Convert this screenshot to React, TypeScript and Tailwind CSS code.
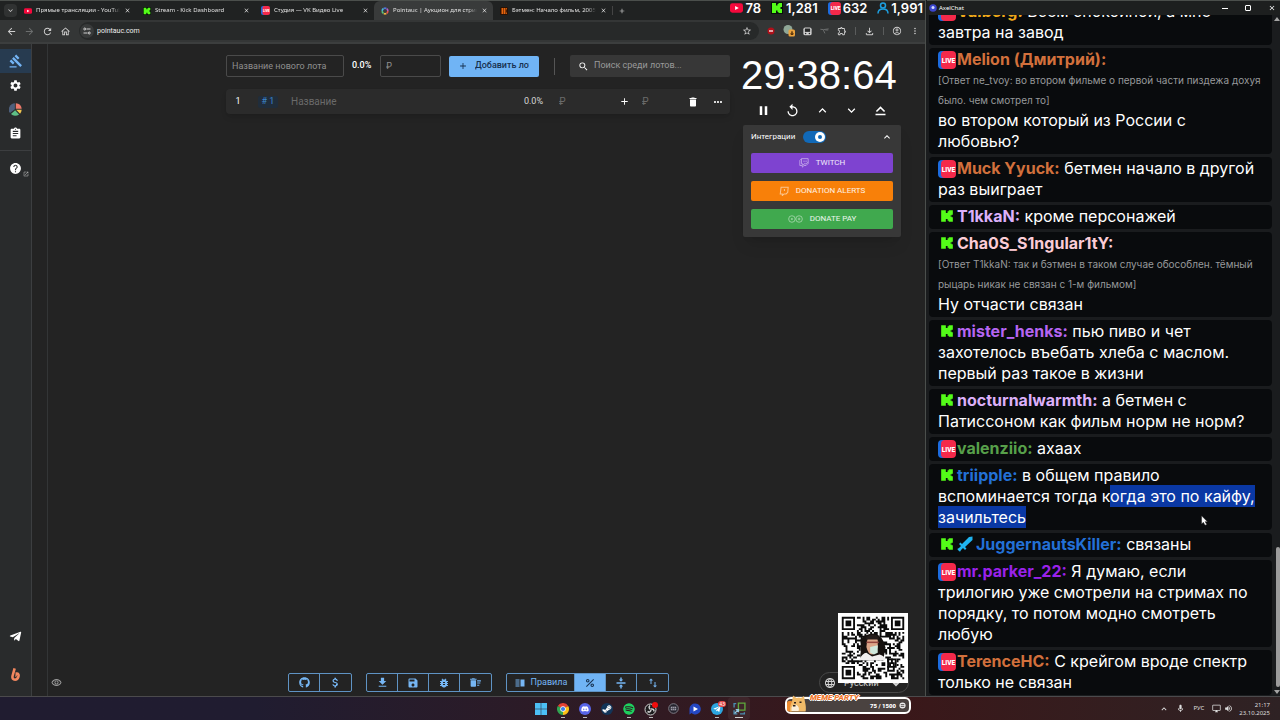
import React from "react";
import {
  MdAdd, MdArrowBack, MdArrowForward, MdAssignment, MdAttachMoney, MdBugReport, MdClose,
  MdDelete, MdDeleteSweep, MdExpandLess, MdExpandMore, MdFileDownload, MdGavel, MdHelp,
  MdLanguage, MdMoreHoriz, MdMoreVert, MdOutlineHome, MdOutlineRemoveRedEye, MdPause,
  MdPercent, MdRefresh, MdReplay, MdSave, MdSearch, MdSettings, MdStarBorder,
  MdVerticalSplit, MdOutlineFileDownload, MdOutlineExtension, MdOutlineAccountCircle,
  MdOpenInNew, MdOutlineMic, MdVolumeUp, MdOutlineDesktopWindows,
} from "react-icons/md";
import { FaDiscord, FaGithub, FaSpotify, FaSteamSymbol, FaTelegramPlane } from "react-icons/fa";

/* ---------- logos ---------- */

function YouTubeLogo({ className }: { className: string }) {
  return (
    <svg viewBox="0 0 28 20" className={className} aria-hidden="true">
      <rect width="28" height="20" rx="5" fill="#f5093c" />
      <path d="M11 5.5v9l8-4.5z" fill="#fff" />
    </svg>
  );
}

function KickLogo({ className, dark = false }: { className: string; dark?: boolean }) {
  return (
    <svg viewBox="0 0 24 24" className={className} aria-hidden="true">
      {dark && <rect width="24" height="24" fill="#07110a" />}
      <path
        d="M2 2h8v5h3V4h2V2h7v8h-2v1h-2v2h2v1h2v8h-7v-2h-2v-3h-3v5H2z"
        fill="#53fc18"
      />
    </svg>
  );
}

function LiveLogo({ className }: { className: string }) {
  return (
    <svg viewBox="0 0 36 36" className={className} role="img" aria-label="LIVE">
      <rect width="30" height="36" rx="8" fill="#1c6ce0" />
      <rect x="6" width="30" height="36" rx="8" fill="#f5294a" />
      <text x="21" y="23" textAnchor="middle" fontFamily="Liberation Sans Narrow, Roboto, sans-serif" fontWeight="900" fontSize="13" fill="#fff">
        LIVE
      </text>
    </svg>
  );
}

function PointaucLogo({ className }: { className: string }) {
  const arcs = ["#e8554e", "#f0b541", "#58c27d", "#4bb8d8", "#4f74d9", "#b45cc9"];
  return (
    <svg viewBox="0 0 24 24" className={className} aria-hidden="true">
      {arcs.map((c, i) => (
        <circle key={c} cx="12" cy="12" r="8.5" fill="none" stroke={c} strokeWidth="5" pathLength={60}
          strokeDasharray="9 51" strokeDashoffset={-i * 10} />
      ))}
    </svg>
  );
}

function WheelIcon({ className }: { className: string }) {
  return (
    <svg viewBox="0 0 40 40" className={className} aria-hidden="true">
      <path d="M18 19V1A19 19 0 0 0 3 31z" fill="#4d5f7c" />
      <path d="M21 18V1A19 19 0 0 1 39 18z" fill="#ee7a6b" />
      <path d="M22 21h17a19 19 0 0 1-5 12z" fill="#f1c54f" />
      <path d="M19 22 31 35A19 19 0 0 1 6 34z" fill="#5fbf86" />
    </svg>
  );
}

function TwitchGlyph({ className }: { className: string }) {
  return (
    <svg viewBox="0 0 24 24" className={className} fill="none" stroke="currentColor" strokeWidth="2" aria-hidden="true">
      <path d="M6 1.500h16V13l-5 5h-5l-4 4v-4H2V6z" />
      <path d="M6 2v12h3v3l3-3h5l5-4M12 6v4M17 6v4" />
    </svg>
  );
}

function AlertsGlyph({ className }: { className: string }) {
  return (
    <svg viewBox="0 0 24 24" className={className} fill="none" stroke="currentColor" strokeWidth="2.500" aria-hidden="true">
      <path d="M5 3h17l-1 12-4 4h-5l-4 4v-4H3z" />
      <path d="M13 7v5" />
    </svg>
  );
}

function DonatePayGlyph({ className }: { className: string }) {
  return (
    <svg viewBox="0 0 46 24" className={className} fill="none" stroke="currentColor" strokeWidth="2.500" aria-hidden="true">
      <circle cx="12" cy="12" r="10" />
      <circle cx="34" cy="12" r="10" />
      <path d="M9 12h6M12 9v6M30 12h8M34 8v8" />
    </svg>
  );
}

function BoostyLogo({ className }: { className: string }) {
  return (
    <svg viewBox="0 0 24 30" className={className} fill="none" stroke="#f2875f" strokeWidth="6" strokeLinejoin="round" aria-hidden="true">
      <path d="M10 1 5 19q-1 8 6 8c8 0 11-14 5-14h-4" />
      <path d="M16 13 12 20" strokeWidth="3" />
    </svg>
  );
}

function SwordIcon({ className }: { className: string }) {
  return (
    <svg viewBox="0 0 32 32" className={className} aria-hidden="true">
      <path d="M31 1v7L16 22l3 3-3 3-4-4-5 5 1 1-3 1-4-4 1-3 1 1 5-5-4-4 3-3 3 3L24 2z" fill="#1fb4f0" />
    </svg>
  );
}

/* ---------- browser chrome ---------- */

type Tab = { title: string; icon: React.ReactNode; active?: boolean };

const tabs: Tab[] = [
  { title: "Прямые трансляции - YouTube", icon: <YouTubeLogo className="h-[6px] w-[8px]" /> },
  { title: "Stream - Kick Dashboard", icon: <KickLogo dark className="size-[8px]" /> },
  { title: "Студия — VK Видео Live", icon: <LiveLogo className="size-[9px]" /> },
  { title: "Pointauc | Аукцион для стримеров", icon: <PointaucLogo className="size-[8px]" />, active: true },
  {
    title: "Бэтмен: Начало фильм, 2005,",
    icon: (
      <svg viewBox="0 0 16 16" className="size-[8px]" aria-hidden="true">
        <rect width="16" height="16" rx="3" fill="#2a1204" />
        <path d="M3 2h4v12H3zM8 2h2v12H8zM11 2h3l-2 6 2 6h-3z" fill="#e8640c" />
      </svg>
    ),
  },
];

function TabStrip() {
  return (
    <div className="flex h-[20px] shrink-0 items-center border-t border-[#4b4f4c] bg-[#202222] pl-[4px]">
      <button aria-label="Поиск вкладок" className="grid size-[13px] place-items-center rounded bg-[#303232] text-[#d0d0d0]">
        <MdExpandMore className="size-[9px]" />
      </button>
      {tabs.map((t) => (
        <div
          key={t.title}
          className={
            t.active
              ? "flex h-full w-[119px] items-center gap-[4px] rounded-t-md bg-[#393b3b] pr-[5px] pl-[6px]"
              : "flex h-full w-[119px] items-center gap-[4px] pr-[5px] pl-[6px]"
          }
        >
          <span className="flex w-[9px] shrink-0 justify-center">{t.icon}</span>
          <a href="#tab" className="min-w-0 flex-1 overflow-hidden mask-r-from-90% text-[6px] whitespace-nowrap text-[#e0e0e0]">
            {t.title}
          </a>
          <button aria-label="Закрыть вкладку" className="text-[#dedede]">
            <MdClose className="size-[7px]" />
          </button>
        </div>
      ))}
      <span className="h-[9px] w-px bg-[#444]" />
      <button aria-label="Новая вкладка" className="ml-[5px] text-[#d8d8d8]">
        <MdAdd className="size-[8px]" />
      </button>
      <div className="ml-auto flex items-center gap-[10px] self-start pr-[2px] font-[Inter,sans-serif] text-[13px] leading-[14px] font-semibold text-white">
        <span className="flex items-center gap-[2px]">
          <YouTubeLogo className="h-[10px] w-[13px]" />78
        </span>
        <span className="flex items-center gap-[3px]">
          <KickLogo dark className="size-[12px]" />1,281
        </span>
        <span className="flex items-center gap-[2px]">
          <LiveLogo className="size-[13px]" />632
        </span>
        <span className="flex items-center gap-[2px]">
          <svg viewBox="0 0 24 24" className="size-[12px]" fill="none" stroke="#1d9fe0" strokeWidth="3" aria-hidden="true">
            <circle cx="12" cy="7" r="5" />
            <path d="M2 23c0-7 5-9 10-9s10 2 10 9" />
          </svg>
          1,991
        </span>
      </div>
    </div>
  );
}

function AddressRow() {
  return (
    <div className="flex h-[24px] shrink-0 items-center border-b-2 border-[#3c3e3e] bg-[#343636] pr-[5px] pl-[6px] text-[#d0d0d0]">
      <div className="flex items-center gap-[7px]">
        <button aria-label="Назад"><MdArrowBack className="size-[11px]" /></button>
        <button aria-label="Вперёд" className="text-[#6c6e6e]"><MdArrowForward className="size-[11px]" /></button>
        <button aria-label="Обновить"><MdRefresh className="size-[11px]" /></button>
        <button aria-label="Домой"><MdOutlineHome className="size-[11px]" /></button>
      </div>
      <div className="ml-[8px] flex h-[18px] flex-1 items-center gap-[3px] rounded-full bg-[#272929] pr-[7px] pl-px">
        <span className="grid size-[14px] place-items-center rounded-full bg-[#383a3a]">
          <svg viewBox="0 0 16 16" className="size-[8px]" fill="none" stroke="currentColor" strokeWidth="2" aria-hidden="true">
            <path d="M7 4h8M1 12h8" />
            <circle cx="3.500" cy="4" r="2" />
            <circle cx="12.500" cy="12" r="2" />
          </svg>
        </span>
        <input aria-label="Адрес" defaultValue="pointauc.com" className="min-w-0 flex-1 bg-transparent font-[Roboto,sans-serif] text-[7px] text-[#eeeeee] outline-none" />
        <MdStarBorder className="size-[10px]" />
      </div>
      <div className="ml-[8px] flex items-center gap-[8px]">
        <svg viewBox="0 0 16 16" className="size-[8px]" aria-hidden="true">
          <circle cx="8" cy="8" r="7" fill="#b0101a" />
          <path d="M4 8h8" stroke="#fff" strokeWidth="2.500" />
        </svg>
        <svg viewBox="0 0 24 24" className="size-[12px]" aria-hidden="true">
          <circle cx="10" cy="9" r="9" fill="#8fa797" />
          <rect x="11" y="9" width="13" height="14" rx="3" fill="#eba23c" />
          <path d="M18 12v8M16 16h4v3h-4z" stroke="#59330b" strokeWidth="2" fill="none" />
        </svg>
        <svg viewBox="0 0 24 24" className="size-[9px]" aria-hidden="true">
          <rect x="1" y="1" width="22" height="21" rx="5" fill="#cfcfcf" />
          <path d="M5 4h14v9H5z" fill="#272929" />
          <circle cx="7" cy="17" r="2" fill="#272929" />
          <circle cx="17" cy="17" r="2" fill="#272929" />
        </svg>
        <svg viewBox="0 0 24 24" className="size-[9px]" fill="none" stroke="#6e7070" strokeWidth="2.500" aria-hidden="true">
          <path d="M1 6l8 1 14-2M9 8l4 9M14 8h8" />
        </svg>
        <MdOutlineExtension className="size-[10px]" />
        <span className="h-[8px] w-px bg-[#5a5c5c]" />
        <MdOutlineFileDownload className="size-[11px]" />
        <span className="h-[8px] w-px bg-[#5a5c5c]" />
        <MdOutlineAccountCircle className="size-[10px]" />
        <MdMoreVert className="size-[10px]" />
      </div>
    </div>
  );
}

function BrowserHeader() {
  return (
    <header className="font-[Noto_Sans,sans-serif]">
      <TabStrip />
      <AddressRow />
    </header>
  );
}

/* ---------- auction page ---------- */

function Sidebar() {
  const item = "grid h-[24px] w-full place-items-center";
  return (
    <nav className="flex w-[32px] shrink-0 flex-col items-center border-r border-[#3c3e40] bg-[#292b2c] pt-[5px] text-white">
      <a href="#auction" aria-label="Аукцион" className={`${item} bg-[#273b50] text-[#74b4f4]`}><MdGavel className="size-[14px]" /></a>
      <a href="#settings" aria-label="Настройки" className={item}><MdSettings className="size-[13px]" /></a>
      <a href="#wheel" aria-label="Колесо" className={item}><WheelIcon className="size-[13px]" /></a>
      <a href="#history" aria-label="История" className={item}><MdAssignment className="size-[13px]" /></a>
      <hr className="mt-[5px] w-full border-[#3c3e40]" />
      <a href="#help" aria-label="Помощь" className="mt-[5px] flex h-[24px] w-full items-center pl-[9px]">
        <MdHelp className="size-[13px] shrink-0" />
        <MdOpenInNew className="mt-[12px] ml-px size-[6px] shrink-0 text-[#c0c0c0]" />
      </a>
      <div className="mt-auto flex flex-col items-center gap-[25px] pb-[15px]">
        <a href="#telegram" aria-label="Telegram"><FaTelegramPlane className="size-[13px]" /></a>
        <a href="#boosty" aria-label="Boosty"><BoostyLogo className="h-[13px] w-[11px]" /></a>
      </div>
    </nav>
  );
}

function LotForm() {
  const box = "h-[22px] rounded-xs border border-[#4a4a4a] bg-transparent px-[5px] text-[9px] text-white placeholder:text-[#8f8f8f] outline-none";
  return (
    <form className="flex items-center gap-[8px]" onSubmit={(e) => e.preventDefault()}>
      <input aria-label="Название нового лота" placeholder="Название нового лота" className={`${box} w-[118px]`} />
      <span className="w-[20px] text-[9px] font-medium text-white">0.0%</span>
      <input aria-label="Сумма" placeholder="₽" className={`${box} w-[61px]`} />
      <button className="flex h-[21px] w-[90px] items-center gap-[7px] rounded-xs bg-[#70b4f5] pl-[9px] text-[9px] font-medium text-[#17314f]">
        <MdAdd className="size-[10px] shrink-0" />
        <span className="w-[54px] overflow-hidden text-left whitespace-nowrap">Добавить лот</span>
      </button>
      <span className="mx-[7px] h-[17px] w-px bg-[#555]" />
      <label className="flex h-[22px] min-w-0 flex-1 items-center gap-[5px] rounded-xs bg-[#373737] px-[8px] text-white">
        <MdSearch className="size-[11px] shrink-0" />
        <input aria-label="Поиск среди лотов" placeholder="Поиск среди лотов..." className="min-w-0 flex-1 bg-transparent text-[9px] placeholder:text-[#9a9a9a] outline-none" />
      </label>
    </form>
  );
}

function LotRow() {
  return (
    <div className="flex h-[25px] items-center rounded bg-[#2b2b2b] pr-[6px] text-[10px] text-[#d6d6d6] shadow-md">
      <span className="w-[24px] text-center text-[9px] text-white">1</span>
      <span className="ml-[8px] flex h-[12px] w-[20px] items-center justify-center rounded-xs bg-[#202d3b] text-[9px] text-[#3d86cc]"># 1</span>
      <input aria-label="Название" placeholder="Название" className="ml-[13px] min-w-0 flex-1 bg-transparent placeholder:text-[#6a6a6a] outline-none" />
      <span className="text-[9px]">0.0%</span>
      <input aria-label="Сумма лота" placeholder="₽" className="ml-[16px] w-[60px] bg-transparent placeholder:text-[#6a6a6a] outline-none" />
      <button aria-label="Прибавить" className="text-white"><MdAdd className="size-[11px]" /></button>
      <input aria-label="Добавка" placeholder="₽" className="ml-[12px] w-[45px] bg-transparent placeholder:text-[#6a6a6a] outline-none" />
      <button aria-label="Удалить" className="text-white"><MdDelete className="size-[12px]" /></button>
      <button aria-label="Ещё" className="ml-[13px] text-white"><MdMoreHoriz className="size-[12px]" /></button>
    </div>
  );
}

function TimerPanel() {
  const service = "flex h-[20px] items-center justify-center gap-[7px] rounded-xs text-[8px] text-white/90";
  return (
    <aside className="w-[158px] shrink-0">
      <div className="-ml-[2px] pt-[5px] font-[Liberation_Sans,sans-serif] text-[40px] leading-[40px] whitespace-nowrap text-white">29:38:64</div>
      <div className="mt-[8px] flex items-center justify-between px-[13px] text-white">
        <button aria-label="Пауза"><MdPause className="size-[15px]" /></button>
        <button aria-label="Сбросить"><MdReplay className="size-[15px]" /></button>
        <button aria-label="Больше"><MdExpandLess className="size-[15px]" /></button>
        <button aria-label="Меньше"><MdExpandMore className="size-[15px]" /></button>
        <button aria-label="Максимум">
          <svg viewBox="0 0 24 24" className="size-[15px]" fill="none" stroke="currentColor" strokeWidth="2.500" aria-hidden="true">
            <path d="m5.500 13.500 6.500-6.500 6.500 6.500M4 18.500h16" />
          </svg>
        </button>
      </div>
      <section className="mt-[7px] rounded-xs bg-[#383838] px-[8px] pb-[8px] text-white shadow-lg">
        <div className="flex h-[28px] items-center pb-[4px]">
          <label htmlFor="integrations" className="text-[8px]">Интеграции</label>
          <span className="ml-[8px] grid h-[12px] w-[23px]">
            <input id="integrations" type="checkbox" role="switch" defaultChecked
              className="peer col-start-1 row-start-1 h-[12px] w-[23px] appearance-none rounded-full bg-[#1169b8]" />
            <span className="pointer-events-none col-start-1 row-start-1 mr-px grid size-[10px] place-items-center self-center justify-self-end rounded-full bg-white">
              <span className="size-[4px] rounded-full bg-[#1169b8]" />
            </span>
          </span>
          <button aria-label="Свернуть" className="ml-auto"><MdExpandLess className="size-[12px]" /></button>
        </div>
        <div className="flex flex-col gap-[8px]">
          <button className={`${service} bg-[#7e43d0]`}><TwitchGlyph className="size-[10px] opacity-60" />TWITCH</button>
          <button className={`${service} bg-[#f88009]`}><AlertsGlyph className="size-[10px] opacity-60" />DONATION ALERTS</button>
          <button className={`${service} bg-[#40a94e]`}><DonatePayGlyph className="h-[8px] w-[15px] opacity-60" />DONATE PAY</button>
        </div>
      </section>
    </aside>
  );
}

const group = "flex h-[19px] divide-x divide-[#5f93c4] overflow-hidden rounded-xs border border-[#5f93c4]";
const cell = "grid w-[31px] place-items-center";

function BottomBar() {
  return (
    <div className="flex items-center pb-[3px] text-[#76b6f3]">
      <button aria-label="Скрыть" className="ml-[3px] text-[#9a9a9a]"><MdOutlineRemoveRedEye className="size-[11px]" /></button>
      <div className="ml-[226px] flex gap-[14px]">
        <div className={group}>
          <button aria-label="GitHub" className={cell}><FaGithub className="size-[11px]" /></button>
          <button aria-label="Поддержать" className={cell}><MdAttachMoney className="size-[13px]" /></button>
        </div>
        <div className={group}>
          <button aria-label="Загрузить" className={cell}><MdFileDownload className="size-[13px]" /></button>
          <button aria-label="Сохранить" className={cell}><MdSave className="size-[12px]" /></button>
          <button aria-label="Сообщить об ошибке" className={cell}><MdBugReport className="size-[12px]" /></button>
          <button aria-label="Очистить" className={cell}><MdDeleteSweep className="size-[13px]" /></button>
        </div>
        <div className={group}>
          <button className="flex w-[68px] items-center justify-center gap-[5px] text-[9px]">
            <MdVerticalSplit className="size-[12px]" />Правила
          </button>
          <button aria-label="Проценты" className={`${cell} bg-[#70b4f5] text-[#17314f]`}><MdPercent className="size-[12px]" /></button>
          <button aria-label="Разделить" className={cell}>
            <svg viewBox="0 0 24 24" className="size-[12px]" fill="currentColor" aria-hidden="true">
              <path d="M3 10.500h18v3H3zM10.500 1h3v4h3L12 9.500 7.500 5h3zM10.500 23h3v-4h3L12 14.500 7.500 19h3z" />
            </svg>
          </button>
          <button aria-label="Сортировать" className={cell}>
            <svg viewBox="0 0 24 24" className="size-[12px]" fill="currentColor" aria-hidden="true">
              <path d="M8 3 4 7h3v7h2V7h3zM17 17v-7h-2v7h-3l4 4 4-4z" />
            </svg>
          </button>
        </div>
      </div>
      <label className="mr-[16px] ml-auto flex h-[21px] w-[90px] items-center gap-[4px] rounded-full border border-[#484848] px-[4px] text-[#d2d2d2]">
        <MdLanguage className="size-[12px] shrink-0" />
        <select aria-label="Язык" className="min-w-0 flex-1 bg-transparent text-[9px] outline-none">
          <option>Русский</option>
        </select>
      </label>
    </div>
  );
}

/* ---------- stream overlays ---------- */

const SIZE = 33;

function buildModules(): string {
  let seed = 20251;
  let d = "";
  const inCorner = (x: number, y: number) =>
    (x < 8 && y < 8) || (x > SIZE - 9 && y < 8) || (x < 8 && y > SIZE - 9);
  for (let y = 0; y < SIZE; y++) {
    for (let x = 0; x < SIZE; x++) {
      seed = (seed * 1103515245 + 12345) % 2147483648;
      const middle = Math.abs(x - 16) < 6 && Math.abs(y - 16) < 6;
      if (!inCorner(x, y) && !middle && (seed >> 12) % 100 < 52) d += `M${x} ${y}h1v1h-1z`;
    }
  }
  const finder = (x: number, y: number) =>
    `M${x} ${y}h7v7h-7zM${x + 1} ${y + 1}v5h5v-5zM${x + 2} ${y + 2}h3v3h-3z`;
  return d + finder(0, 0) + finder(SIZE - 7, 0) + finder(0, SIZE - 7);
}

const modules = buildModules();

function QrCode() {
  return (
    <svg viewBox="-2 -2 37 37" className="absolute right-[17px] bottom-[13px] size-[70px]" role="img" aria-label="QR-код">
      <rect x="-2" y="-2" width="37" height="37" fill="#fff" />
      <path d={modules} fill="#0b0b0b" />
      <path d="M24 22h5v5h-5zM25 23v3h3v-3zM26 24h1v1h-1z" fill="#0b0b0b" />
      <path d="M10 12q2-3 7-3 5 1 6 7l-1 7H10V15z" fill="#16110f" />
      <path d="M13.500 12q3-2 5.500 0v4q-1 4-3 4t-3-4z" fill="#dba588" />
      <path d="M13 10.500q4-2 6.500 0v1.500H13z" fill="#241c1a" />
      <path d="M13 13.500h6.500" stroke="#94463f" strokeWidth=".8" />
      <path d="m15 16 4-1v4l-2 1-2-1z" fill="#cfe8dc" />
      <path d="M9 23q2-4 4-4l3 2 4-1q3 1 3 3z" fill="#f0eeee" />
    </svg>
  );
}

function MemeParty() {
  return (
    <div className="absolute right-[14px] -bottom-[18px] z-10 flex h-[17px] w-[126px] items-center justify-end rounded-md border-2 border-white bg-[#4a4240] pr-[3px]">
      <svg viewBox="0 0 40 36" className="absolute bottom-0 left-0 h-[18px] w-[20px]" aria-hidden="true">
        <rect x="0" y="14" width="12" height="21" rx="4" fill="#ec8b30" />
        <path d="M6 35C5 26 8 20 10 15l2-12 7 5q5-2 9 0l6-4 2 12q3 12 1 19z" fill="#f1ba68" />
        <path d="M9 27q4-8 10-5 7 5 4 12H9z" fill="#fbeed8" />
        <path d="M14 16h4v3h-4zM25 15h4v3h-4zM12 22h5v3h-5z" fill="#2d211b" />
      </svg>
      <span className="absolute -top-[6px] left-[23px] text-[8px] leading-[10px] font-black text-[#f0762a] italic [text-shadow:0_1px_0_#fff,0_-1px_0_#fff,1px_0_0_#fff,-1px_0_0_#fff]">MEME PARTY</span>
      <span className="flex items-center gap-[3px] text-[6px] font-black text-white">
        75 / 1500
        <svg viewBox="0 0 16 16" className="size-[7px]" aria-hidden="true">
          <circle cx="8" cy="8" r="7" fill="#eee" />
          <path d="M4 6h8M4 10h8" stroke="#4a4240" strokeWidth="2" />
        </svg>
      </span>
    </div>
  );
}

function Browser() {
  return (
    <main className="relative flex min-w-0 flex-1 flex-col border-r border-[#4b4f4c] bg-[#232323] font-[Roboto,sans-serif]">
      <BrowserHeader />
      <div className="flex min-h-0 flex-1">
        <Sidebar />
        <div className="ml-[15px] flex min-w-0 flex-1 flex-col border-l border-[#333536]">
          <div className="flex flex-1 justify-end gap-[13px] pt-[6px] pr-[24px]">
            <div className="flex w-[504px] flex-col gap-[12px] pt-[5px]">
              <LotForm />
              <LotRow />
            </div>
            <TimerPanel />
          </div>
          <BottomBar />
        </div>
      </div>
      <QrCode />
      <MemeParty />
    </main>
  );
}

/* ---------- chat ---------- */

type Message = {
  from: "kick" | "live";
  name: string;
  color: string;
  text: string;
  selected?: string;
  reply?: string;
  sword?: boolean;
};

const messages: Message[] = [
  { from: "live", name: "Valberg", color: "text-[#f0a91b]", text: "Всем спокойной, а мне завтра на завод" },
  {
    from: "live", name: "Melion (Дмитрий)", color: "text-[#d2703c]",
    reply: "[Ответ ne_tvoy: во втором фильме о первой части пиздежа дохуя было. чем смотрел то]",
    text: "во втором который из России с любовью?",
  },
  { from: "live", name: "Muck Yyuck", color: "text-[#d2703c]", text: "бетмен начало в другой раз выиграет" },
  { from: "kick", name: "T1kkaN", color: "text-[#dcb0fa]", text: "кроме персонажей" },
  {
    from: "kick", name: "Cha0S_S1ngular1tY", color: "text-[#fbccd6]",
    reply: "[Ответ T1kkaN: так и бэтмен в таком случае обособлен. тёмный рыцарь никак не связан с 1-м фильмом]",
    text: "Ну отчасти связан",
  },
  { from: "kick", name: "mister_henks", color: "text-[#b565f2]", text: "пью пиво и чет захотелось въебать хлеба с маслом. первый раз такое в жизни" },
  { from: "kick", name: "nocturnalwarmth", color: "text-[#dcb0fa]", text: "а бетмен с Патиссоном как фильм норм не норм?" },
  { from: "live", name: "valenziio", color: "text-[#57a04a]", text: "ахаах" },
  { from: "kick", name: "triipple", color: "text-[#2370d6]", text: "в общем правило вспоминается тогда к", selected: "огда это по кайфу, зачильтесь" },
  { from: "kick", name: "JuggernautsKiller", color: "text-[#2370d6]", text: "связаны", sword: true },
  { from: "live", name: "mr.parker_22", color: "text-[#9a22ea]", text: "Я думаю, если трилогию уже смотрели на стримах по порядку, то потом модно смотреть любую" },
  { from: "live", name: "TerenceHC", color: "text-[#d2703c]", text: "С крейгом вроде спектр только не связан" },
];

function ChatMessage({ m }: { m: Message }) {
  return (
    <li className="rounded bg-[#090b0d] pt-px pr-[8px] pb-[2px] pl-[9px]">
      {m.from === "live" ? (
        <LiveLogo className="mr-px inline size-[18px] align-[-4px]" />
      ) : (
        <KickLogo className="mr-[3px] ml-[2px] inline size-[14px] align-[-1px]" />
      )}
      {m.sword && <SwordIcon className="mr-[3px] inline size-[16px] align-[-2px]" />}
      <b className={`font-bold ${m.color}`}>{m.name}:</b>{" "}
      {m.reply && <span className="block text-[10px] leading-[20px] text-[#97999b]">{m.reply}</span>}
      {m.text}
      {m.selected && <mark className="bg-[#0a38a4] py-px text-white">{m.selected}</mark>}
    </li>
  );
}

function Chat() {
  return (
    <section className="relative flex w-[353px] shrink-0 flex-col bg-[#1a1c1e] font-[Inter,sans-serif]">
      <header className="flex h-[15px] shrink-0 items-center border-t border-[#4b4f4c] bg-[#1d1f1f] pr-[4px] pl-[2px] text-white">
        <svg viewBox="0 0 16 16" className="size-[8px]" aria-hidden="true">
          <circle cx="8" cy="8" r="7.500" fill="#3b46cf" />
          <circle cx="8" cy="7" r="3" fill="#d5dcff" />
        </svg>
        <h1 className="ml-[2px] font-[Noto_Sans,sans-serif] text-[6px]">AxelChat</h1>
        <div className="ml-auto flex items-center gap-[17px]">
          <button aria-label="Свернуть окно" className="grid h-[6px] w-[6px] items-center"><span className="h-px w-full bg-white" /></button>
          <button aria-label="Развернуть окно" className="size-[6px] rounded-[1px] border border-white" />
          <button aria-label="Закрыть окно"><MdClose className="size-[8px]" /></button>
        </div>
      </header>
      <div className="flex min-h-0 flex-1">
        <ul className="flex min-w-0 flex-1 flex-col justify-end gap-[3px] overflow-hidden pr-[2px] pb-px pl-[2px] text-[16px] leading-[21px] text-white">
          {messages.map((m) => <ChatMessage key={m.name} m={m} />)}
        </ul>
        <div className="flex w-[6px] flex-col items-center justify-between py-[2px] text-[#a5a5a5]" aria-hidden="true">
          <svg viewBox="0 0 6 4" className="h-[4px] w-[6px]"><path d="M3 0l3 4H0z" fill="currentColor" /></svg>
          <div className="flex w-full flex-1 flex-col justify-end pb-[3px] pl-[2px]">
            <span className="h-[21%] rounded-full bg-[#9c9c9c]" />
          </div>
          <svg viewBox="0 0 6 4" className="h-[4px] w-[6px]"><path d="M3 4l3-4H0z" fill="currentColor" /></svg>
        </div>
      </div>
      <svg viewBox="0 0 12 18" className="absolute top-[515px] right-[72px] h-[11px] w-[7px]" aria-hidden="true">
        <path d="M1 1v14l3-3 3 5 3-1-3-5h4z" fill="#fff" stroke="#222" strokeWidth=".8" />
      </svg>
    </section>
  );
}

/* ---------- taskbar ---------- */

function Taskbar() {
  const slot = "relative grid h-full w-[22px] place-items-center";
  const dot = "absolute bottom-[2px] h-px w-[4px] bg-[#b9b9b9]";
  return (
    <footer className="grid h-[24px] shrink-0 grid-cols-[1fr_auto_1fr] items-center border-t border-[#4b4a4c] bg-linear-to-r from-[#201c30] from-20% via-[#3a1719] via-70% to-[#2e2224] font-[Noto_Sans,sans-serif]">
      <span />
      <div className="flex h-full">
        <button aria-label="Пуск" className={slot}>
          <svg viewBox="0 0 24 24" className="size-[12px]" aria-hidden="true">
            <path d="M0 0h11.500v11.500H0zM12.500 0H24v11.500H12.500zM0 12.500h11.500V24H0zM12.500 12.500H24V24H12.500z" fill="#4cbff5" />
          </svg>
        </button>
        <button aria-label="Chrome" className={slot}>
          <svg viewBox="0 0 24 24" className="size-[12px]" aria-hidden="true">
            <path d="M12 12 1.600 6A12 12 0 0 1 22.400 6z" fill="#e34133" />
            <path d="M12 12 22.400 6A12 12 0 0 1 12 24z" fill="#fbc116" />
            <path d="M12 12v12A12 12 0 0 1 1.600 6z" fill="#31a552" />
            <circle cx="12" cy="12" r="5.500" fill="#fff" />
            <circle cx="12" cy="12" r="4.200" fill="#3c7ee8" />
          </svg>
          <i className={dot} />
        </button>
        <button aria-label="Discord" className={slot}>
          <span className="grid size-[12px] place-items-center rounded-full bg-[#5865e8] text-white"><FaDiscord className="size-[8px]" /></span>
          <i className={dot} />
        </button>
        <button aria-label="Steam" className={slot}>
          <span className="grid size-[12px] place-items-center rounded-full bg-[#123458] text-white"><FaSteamSymbol className="size-[10px]" /></span>
        </button>
        <button aria-label="Spotify" className={slot}><FaSpotify className="size-[12px] rounded-full text-[#1ed05e]" /><i className={dot} /></button>
        <button aria-label="OBS" className={slot}>
          <svg viewBox="0 0 28 28" className="size-[14px]" aria-hidden="true">
            <circle cx="13" cy="15" r="11" fill="#1c1b1d" stroke="#d0d0d0" strokeWidth="2" />
            <path d="M12 7q-4 4 1 8M20 19q0-6-6-5M7 19q6 3 7-3" stroke="#d0d0d0" strokeWidth="3" fill="none" />
            <circle cx="22" cy="6" r="6" fill="#f20d0d" />
          </svg>
          <i className={dot} />
        </button>
        <button aria-label="Запись" className={slot}>
          <svg viewBox="0 0 24 24" className="size-[11px]" aria-hidden="true">
            <circle cx="12" cy="12" r="10.500" fill="#24222c" stroke="#85838c" strokeWidth="2" />
            <path d="M6 8h12v8H6z" fill="#a3a1ad" />
            <path d="M6 12h12M10 8v8M14 8v8" stroke="#24222c" />
          </svg>
        </button>
        <button aria-label="AxelChat" className={slot}>
          <svg viewBox="0 0 24 24" className="size-[12px]" aria-hidden="true">
            <path d="M12 1a11 11 0 1 1-7 19l-4 3V11A11 11 0 0 1 12 1z" fill="#2447c2" />
            <path d="m9 7 9 5-9 5z" fill="#fff" />
          </svg>
        </button>
        <button aria-label="Telegram" className={slot}>
          <span className="grid size-[12px] place-items-center rounded-full bg-[#2ca5e0] text-white"><FaTelegramPlane className="size-[8px]" /></span>
          <span className="absolute top-[4px] right-[2px] rounded-full bg-[#e44848] px-[1px] text-[5px] leading-[6px] text-white">43</span>
          <i className={dot} />
        </button>
        <button aria-label="Захват экрана" className={`${slot} rounded bg-white/5`}>
          <svg viewBox="0 0 24 24" className="size-[13px]" fill="none" strokeWidth="2.500" aria-hidden="true">
            <path d="M10 2h12v13H10z" stroke="#5fa83c" />
            <path d="M6 3H2v7M2 15v7h6M13 22h8v-3" stroke="#4b8db0" />
            <path d="m3 21 7-7M10 19v-5H5" stroke="#93c5df" />
          </svg>
          <i className="absolute bottom-[2px] h-px w-[8px] bg-[#cfcfcf]" />
        </button>
      </div>
      <div className="flex items-center justify-end pr-[10px] text-[#dedede]">
        <button aria-label="Скрытые значки"><MdExpandLess className="size-[10px]" /></button>
        <MdOutlineMic className="ml-[7px] size-[9px]" />
        <span className="ml-[9px] text-[6px]">РУС</span>
        <MdOutlineDesktopWindows className="ml-[8px] size-[9px]" />
        <MdVolumeUp className="ml-[3px] size-[9px]" />
        <time className="ml-[6px] text-right text-[6px] leading-[8px]">21:17<br />23.10.2025</time>
      </div>
    </footer>
  );
}

export default function App() {
  return (
    <div className="flex h-screen min-h-0 flex-col overflow-hidden bg-[#1a1c1e]">
      <div className="flex min-h-0 flex-1 gap-px">
        <Browser />
        <Chat />
      </div>
      <Taskbar />
    </div>
  );
}
